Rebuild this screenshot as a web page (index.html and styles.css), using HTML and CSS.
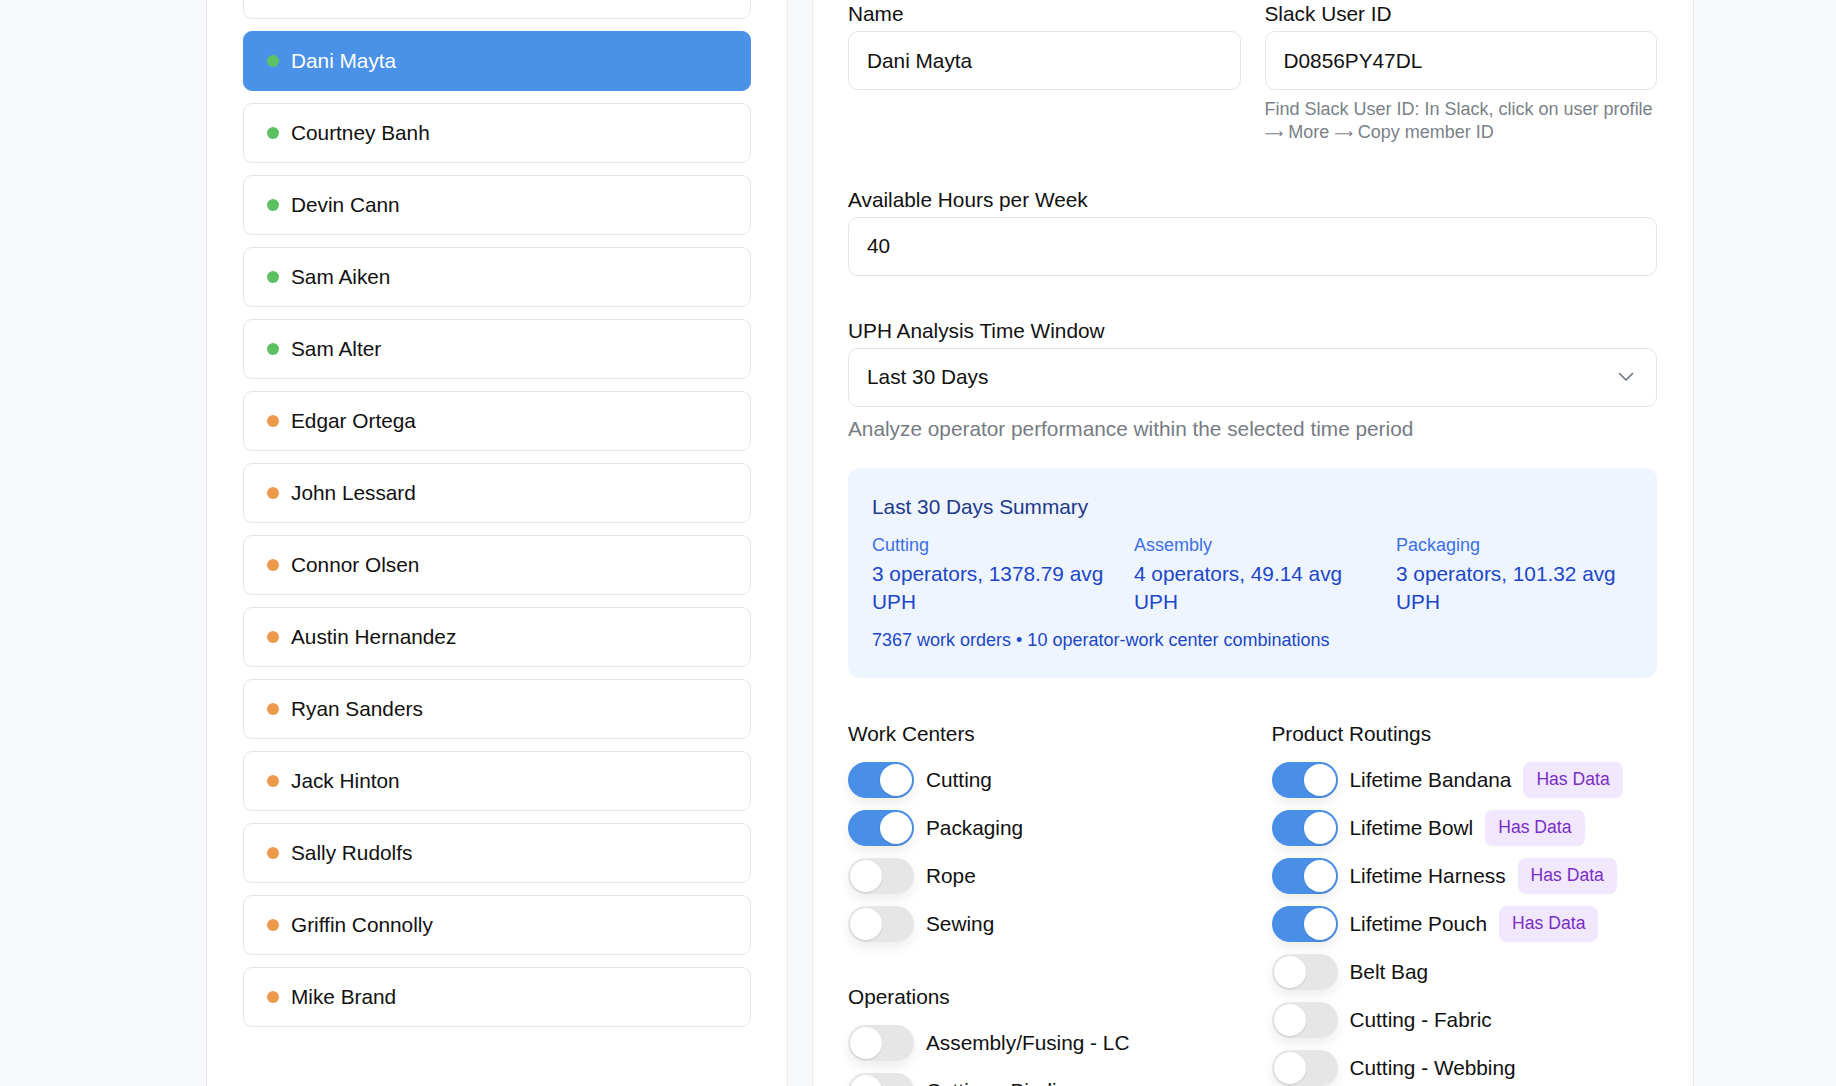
FILE: index.html
```html
<!DOCTYPE html>
<html lang="en">
<head>
<meta charset="utf-8">
<title>Operators</title>
<link rel="stylesheet" href="styles.css">
</head>
<body>
<div class="layout">
  <aside class="list-panel">
    <ul class="op-list">
      <li class="op-item"><span class="dot dot-green"></span>Marcus Hardy</li>
      <li class="op-item is-selected"><span class="dot dot-green"></span>Dani Mayta</li>
      <li class="op-item"><span class="dot dot-green"></span>Courtney Banh</li>
      <li class="op-item"><span class="dot dot-green"></span>Devin Cann</li>
      <li class="op-item"><span class="dot dot-green"></span>Sam Aiken</li>
      <li class="op-item"><span class="dot dot-green"></span>Sam Alter</li>
      <li class="op-item"><span class="dot dot-orange"></span>Edgar Ortega</li>
      <li class="op-item"><span class="dot dot-orange"></span>John Lessard</li>
      <li class="op-item"><span class="dot dot-orange"></span>Connor Olsen</li>
      <li class="op-item"><span class="dot dot-orange"></span>Austin Hernandez</li>
      <li class="op-item"><span class="dot dot-orange"></span>Ryan Sanders</li>
      <li class="op-item"><span class="dot dot-orange"></span>Jack Hinton</li>
      <li class="op-item"><span class="dot dot-orange"></span>Sally Rudolfs</li>
      <li class="op-item"><span class="dot dot-orange"></span>Griffin Connolly</li>
      <li class="op-item"><span class="dot dot-orange"></span>Mike Brand</li>
    </ul>
  </aside>

  <main class="detail-panel">
    <div class="row-2">
      <div class="field">
        <label class="label">Name</label>
        <div class="input">Dani Mayta</div>
      </div>
      <div class="field">
        <label class="label">Slack User ID</label>
        <div class="input">D0856PY47DL</div>
        <p class="hint-small">Find Slack User ID: In Slack, click on user profile <span class="arrow">⟶</span> More <span class="arrow">⟶</span> Copy member ID</p>
      </div>
    </div>

    <div class="field section">
      <label class="label">Available Hours per Week</label>
      <div class="input">40</div>
    </div>

    <div class="field section">
      <label class="label">UPH Analysis Time Window</label>
      <div class="input select">
        <span>Last 30 Days</span>
        <svg class="chevron" width="16" height="10" viewBox="0 0 16 10"><polyline points="1.5,1.5 8,8 14.5,1.5" fill="none" stroke="#6b7280" stroke-width="1.6" stroke-linecap="round" stroke-linejoin="round"/></svg>
      </div>
      <p class="hint">Analyze operator performance within the selected time period</p>
    </div>

    <div class="summary">
      <div class="summary-title">Last 30 Days Summary</div>
      <div class="summary-grid">
        <div class="stat">
          <div class="stat-label">Cutting</div>
          <div class="stat-value">3 operators, 1378.79 avg UPH</div>
        </div>
        <div class="stat">
          <div class="stat-label">Assembly</div>
          <div class="stat-value">4 operators, 49.14 avg UPH</div>
        </div>
        <div class="stat">
          <div class="stat-label">Packaging</div>
          <div class="stat-value">3 operators, 101.32 avg UPH</div>
        </div>
      </div>
      <div class="summary-foot">7367 work orders • 10 operator-work center combinations</div>
    </div>

    <div class="toggle-grid">
      <div class="toggle-col">
        <div class="group">
          <div class="group-title">Work Centers</div>
          <div class="toggle-list">
            <div class="toggle-row"><span class="switch is-on"><span class="knob"></span></span><span class="toggle-text">Cutting</span></div>
            <div class="toggle-row"><span class="switch is-on"><span class="knob"></span></span><span class="toggle-text">Packaging</span></div>
            <div class="toggle-row"><span class="switch"><span class="knob"></span></span><span class="toggle-text">Rope</span></div>
            <div class="toggle-row"><span class="switch"><span class="knob"></span></span><span class="toggle-text">Sewing</span></div>
          </div>
        </div>
        <div class="group group-next">
          <div class="group-title">Operations</div>
          <div class="toggle-list">
            <div class="toggle-row"><span class="switch"><span class="knob"></span></span><span class="toggle-text">Assembly/Fusing - LC</span></div>
            <div class="toggle-row"><span class="switch"><span class="knob"></span></span><span class="toggle-text">Cutting - Binding</span></div>
            <div class="toggle-row"><span class="switch"><span class="knob"></span></span><span class="toggle-text">Cutting - Fabric</span></div>
          </div>
        </div>
      </div>
      <div class="toggle-col">
        <div class="group">
          <div class="group-title">Product Routings</div>
          <div class="toggle-list">
            <div class="toggle-row"><span class="switch is-on"><span class="knob"></span></span><span class="toggle-text">Lifetime Bandana</span><span class="badge">Has Data</span></div>
            <div class="toggle-row"><span class="switch is-on"><span class="knob"></span></span><span class="toggle-text">Lifetime Bowl</span><span class="badge">Has Data</span></div>
            <div class="toggle-row"><span class="switch is-on"><span class="knob"></span></span><span class="toggle-text">Lifetime Harness</span><span class="badge">Has Data</span></div>
            <div class="toggle-row"><span class="switch is-on"><span class="knob"></span></span><span class="toggle-text">Lifetime Pouch</span><span class="badge">Has Data</span></div>
            <div class="toggle-row"><span class="switch"><span class="knob"></span></span><span class="toggle-text">Belt Bag</span></div>
            <div class="toggle-row"><span class="switch"><span class="knob"></span></span><span class="toggle-text">Cutting - Fabric</span></div>
            <div class="toggle-row"><span class="switch"><span class="knob"></span></span><span class="toggle-text">Cutting - Webbing</span></div>
            <div class="toggle-row"><span class="switch"><span class="knob"></span></span><span class="toggle-text">Sewing - Main</span></div>
          </div>
        </div>
      </div>
    </div>
  </main>
</div>
</body>
</html>
```

FILE: styles.css
```css
* { box-sizing: border-box; }

html, body {
  margin: 0;
  padding: 0;
  background: #f8f9fb;
  font-family: "Liberation Sans", Arial, Helvetica, sans-serif;
  color: #111111;
  overflow: hidden;
}

.layout {
  display: flex;
  align-items: stretch;
  gap: 24px;
  padding-left: 206px;
  margin-top: -41px;
}

/* ---------- left list ---------- */
.list-panel {
  width: 582px;
  flex: none;
  background: #ffffff;
  border-left: 1px solid #e6e8ec;
  border-right: 1px solid #e6e8ec;
  padding: 0 36px 60px 36px;
}

.op-list {
  list-style: none;
  margin: 0;
  padding: 0;
  display: flex;
  flex-direction: column;
  gap: 12px;
}

.op-item {
  height: 60px;
  display: flex;
  align-items: center;
  gap: 12px;
  padding: 0 23px;
  border: 1px solid #e3e4e7;
  border-radius: 9px;
  background: #ffffff;
  font-size: 20.8px;
  color: #111111;
}

.op-item.is-selected {
  background: #4a91e8;
  border-color: #4a91e8;
  color: #ffffff;
}

.dot {
  width: 12px;
  height: 12px;
  border-radius: 50%;
  flex: none;
}
.dot-green { background: #5cc163; }
.dot-orange { background: #ee9a4d; }

/* ---------- right detail ---------- */
.detail-panel {
  width: 882px;
  flex: none;
  background: #ffffff;
  border-left: 1px solid #e6e8ec;
  border-right: 1px solid #e6e8ec;
  padding: 41px 36px 60px 35px;
  display: flex;
  flex-direction: column;
}

.row-2 {
  display: grid;
  grid-template-columns: 1fr 1fr;
  column-gap: 24px;
}

.field { display: flex; flex-direction: column; }
.section { margin-top: 41px; }

.label {
  font-size: 20.8px;
  line-height: 28px;
  margin-bottom: 3px;
  color: #111111;
}

.input {
  height: 59px;
  border: 1px solid #e2e4e8;
  border-radius: 10px;
  padding: 0 18px;
  display: flex;
  align-items: center;
  font-size: 20.8px;
  color: #111111;
  background: #ffffff;
}

.select {
  justify-content: space-between;
  padding-right: 22px;
}

.chevron { display: block; }

.hint-small {
  margin: 8px 0 0 0;
  font-size: 18px;
  line-height: 23.4px;
  color: #7a7f88;
}

.arrow {
  font-family: "DejaVu Sans", sans-serif;
  font-size: 13px;
  line-height: 0;
}

.hint {
  margin: 8px 0 0 0;
  font-size: 20.8px;
  line-height: 28px;
  color: #767b84;
}

/* ---------- summary ---------- */
.summary {
  margin-top: 25px;
  background: #eff5fe;
  border-radius: 12px;
  padding: 25px 24px 25px 24px;
}

.summary-title {
  font-size: 20.8px;
  line-height: 28px;
  color: #1e3a8a;
}

.summary-grid {
  margin-top: 13px;
  display: grid;
  grid-template-columns: 238px 238px 238px;
  column-gap: 24px;
}

.stat-label {
  font-size: 18px;
  line-height: 23.4px;
  color: #3b6fe6;
}

.stat-value {
  margin-top: 3px;
  font-size: 20.8px;
  line-height: 28px;
  color: #2046c8;
}

.summary-foot {
  margin-top: 13px;
  font-size: 18px;
  line-height: 23.4px;
  color: #2046c8;
}

/* ---------- toggles ---------- */
.toggle-grid {
  margin-top: 42px;
  display: grid;
  grid-template-columns: 1fr 1fr;
  column-gap: 38px;
}

.group-next { margin-top: 41px; }

.group-title {
  font-size: 20.8px;
  line-height: 28px;
  color: #111111;
}

.toggle-list {
  margin-top: 14px;
  display: flex;
  flex-direction: column;
  gap: 12px;
}

.toggle-row {
  display: flex;
  align-items: center;
  gap: 12px;
  height: 36px;
}

.switch {
  width: 66px;
  height: 36px;
  flex: none;
  border-radius: 18px;
  background: #e6e6e6;
  display: flex;
  align-items: center;
  padding: 2px;
  box-shadow: 0 6px 12px rgba(0, 0, 0, 0.07);
}

.switch.is-on {
  background: #4a8fe7;
  justify-content: flex-end;
}

.knob {
  width: 32px;
  height: 32px;
  border-radius: 50%;
  background: #ffffff;
  box-shadow: 0 1px 2px rgba(0, 0, 0, 0.12);
}

.toggle-text {
  font-size: 20.8px;
  color: #111111;
  white-space: nowrap;
}

.badge {
  height: 36px;
  display: inline-flex;
  align-items: center;
  padding: 0 13px;
  border-radius: 7px;
  background: #f2e8fd;
  color: #7a2fc2;
  font-size: 17.6px;
  white-space: nowrap;
}
```
